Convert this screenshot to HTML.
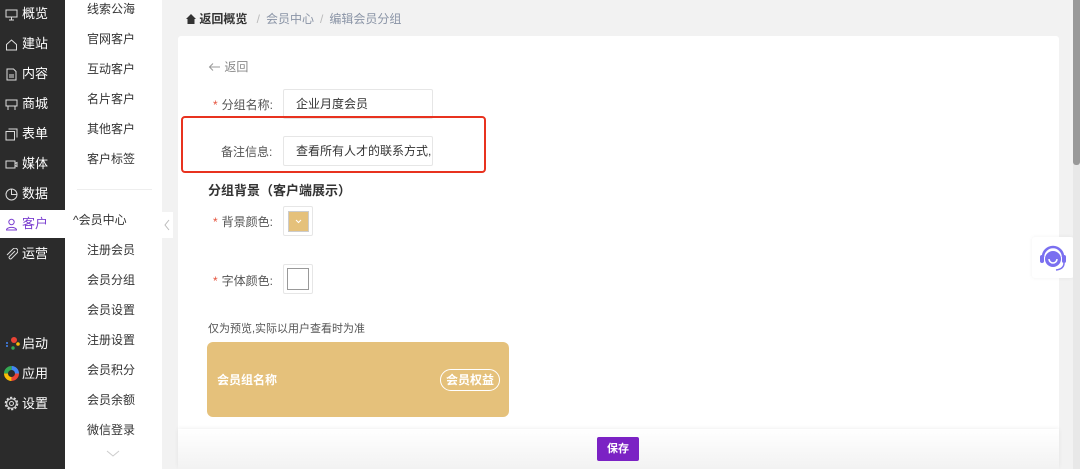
<!DOCTYPE html>
<html><head><meta charset="utf-8"><style>
*{margin:0;padding:0;box-sizing:border-box}
body{width:1080px;height:469px;overflow:hidden;background:#f2f2f2;font-family:"Liberation Sans","Noto Sans CJK SC",sans-serif;position:relative;font-size:12px;color:#333}
.side{position:absolute;left:0;top:0;width:65px;height:469px;background:#2b2b2b}
.si{position:absolute;left:0;width:65px;height:28px;color:#fff;font-size:13px;line-height:28px;padding-left:22px}
.si svg{position:absolute;left:5px;top:8px}
.si.act{background:#fff;color:#7b3fd0}
.sub{position:absolute;left:65px;top:0;width:97px;height:469px;background:#fff}
.sb{position:absolute;left:22px;font-size:12px;color:#333}
.card{position:absolute;left:178px;top:36px;width:881px;height:433px;background:#fff;border-radius:3px}
.abs{position:absolute}
.inp{position:absolute;left:283px;width:150px;height:30px;border:1px solid #e6e6e6;border-radius:2px;padding-left:12px;line-height:28px;font-size:12px;color:#333}
.lbl{position:absolute;font-size:12px;color:#555}
.star{color:#e5533d;margin-right:4px}
</style></head><body>
<div class="side">
 <div class="si" style="top:0"><svg width="13" height="13"><rect x="1" y="2" width="11" height="7" fill="none" stroke="#ddd"/><path d="M4 12h5M6.5 9v3" stroke="#ddd"/></svg>概览</div>
 <div class="si" style="top:30px"><svg width="13" height="13"><path d="M1.5 6.5L6.5 2l5 4.5V12h-10z" fill="none" stroke="#ddd"/></svg>建站</div>
 <div class="si" style="top:60px"><svg width="13" height="13"><path d="M2 1h6.5l2.5 2.5V12H2z" fill="none" stroke="#ddd"/><path d="M4 7h5M4 9h5" stroke="#ddd"/></svg>内容</div>
 <div class="si" style="top:90px"><svg width="13" height="13"><rect x="1" y="2" width="11" height="6" fill="none" stroke="#ddd"/><path d="M3 8v4M10 8v4" stroke="#ddd"/></svg>商城</div>
 <div class="si" style="top:120px"><svg width="13" height="13"><rect x="1" y="3.5" width="8.5" height="8.5" fill="none" stroke="#ddd"/><path d="M3.5 1H12v8.5" fill="none" stroke="#ddd"/></svg>表单</div>
 <div class="si" style="top:150px"><svg width="13" height="13"><rect x="1" y="3" width="9" height="7" fill="none" stroke="#ddd"/><path d="M10 5.5l2-1v4l-2-1" fill="none" stroke="#ddd"/></svg>媒体</div>
 <div class="si" style="top:180px"><svg width="13" height="13"><circle cx="6.5" cy="6.5" r="5.5" fill="none" stroke="#ddd"/><path d="M6.5 1v5.5H12" fill="none" stroke="#ddd"/></svg>数据</div>
 <div class="si act" style="top:210px"><svg width="13" height="13"><circle cx="6.5" cy="4" r="2.7" fill="none" stroke="#7b3fd0"/><path d="M1.5 12c0-3.5 10-3.5 10 0z" fill="none" stroke="#7b3fd0"/></svg>客户</div>
 <div class="si" style="top:240px"><svg width="13" height="13"><path d="M10 3L4.5 8.5a1.4 1.4 0 002 2L12 5a2.6 2.6 0 00-4-4L2 7" fill="none" stroke="#ddd"/></svg>运营</div>
 <div class="si" style="top:330px"><svg width="16" height="14" style="top:6px;left:4px"><circle cx="10" cy="4" r="3" fill="#ea4335"/><circle cx="14" cy="8" r="1.8" fill="#fbbc05"/><circle cx="9" cy="12" r="1.7" fill="#34a853"/><circle cx="3" cy="7" r="1" fill="#4285f4"/><circle cx="3" cy="10" r="1" fill="#4285f4"/></svg>启动</div>
 <div class="si" style="top:360px"><svg width="15" height="15" style="top:6px;left:4px"><circle cx="7.5" cy="7.5" r="5.5" fill="none" stroke="#ea4335" stroke-width="4" stroke-dasharray="8.64 34.6"/><circle cx="7.5" cy="7.5" r="5.5" fill="none" stroke="#fbbc05" stroke-width="4" stroke-dasharray="0 8.64 8.64 34.6"/><circle cx="7.5" cy="7.5" r="5.5" fill="none" stroke="#34a853" stroke-width="4" stroke-dasharray="0 17.28 8.64 34.6"/><circle cx="7.5" cy="7.5" r="5.5" fill="none" stroke="#4285f4" stroke-width="4" stroke-dasharray="0 25.92 8.64 34.6"/></svg>应用</div>
 <div class="si" style="top:390px"><svg width="15" height="15" style="top:6px;left:4px"><circle cx="7.5" cy="7.5" r="6" fill="none" stroke="#ddd" stroke-width="1.6" stroke-dasharray="2.2 1.6"/><circle cx="7.5" cy="7.5" r="4.8" fill="none" stroke="#ddd"/><circle cx="7.5" cy="7.5" r="2" fill="none" stroke="#ddd"/></svg>设置</div>
</div>
<div class="sub">
 <div class="sb" style="top:0px">线索公海</div>
 <div class="sb" style="top:30px">官网客户</div>
 <div class="sb" style="top:60px">互动客户</div>
 <div class="sb" style="top:90px">名片客户</div>
 <div class="sb" style="top:120px">其他客户</div>
 <div class="sb" style="top:150px">客户标签</div>
 <div class="abs" style="left:12px;top:189px;width:75px;height:1px;background:#eee"></div>
 <div class="sb" style="left:8px;top:211px">^会员中心</div>
 <div class="sb" style="top:241px">注册会员</div>
 <div class="sb" style="top:271px">会员分组</div>
 <div class="sb" style="top:301px">会员设置</div>
 <div class="sb" style="top:331px">注册设置</div>
 <div class="sb" style="top:361px">会员积分</div>
 <div class="sb" style="top:391px">会员余额</div>
 <div class="sb" style="top:421px">微信登录</div>
 <svg class="abs" style="left:41px;top:450px" width="14" height="8"><path d="M1 1l6 5 6-5" fill="none" stroke="#ccc"/></svg>
</div>
<div class="abs" style="left:162px;top:212px;width:11px;height:26px;background:#fff"><svg width="11" height="26"><path d="M7 8l-4 5 4 5" fill="none" stroke="#bbb"/></svg></div>
<div class="abs" style="left:186px;top:10px;font-size:12px;color:#333;font-weight:bold"><svg width="10" height="10" style="vertical-align:-1px"><path d="M5 0L0 5h1.5v5h7V5H10z" fill="#333"/></svg> 返回概览 <span style="color:#bbb;font-weight:normal;margin:0 6px">/</span><span style="color:#8a94a6;font-weight:normal">会员中心</span><span style="color:#bbb;font-weight:normal;margin:0 6px">/</span><span style="color:#8a94a6;font-weight:normal">编辑会员分组</span></div>
<div class="card"></div>
<div class="abs" style="left:208px;top:58px;color:#888;font-size:12px"><svg width="13" height="10" style="vertical-align:-1px"><path d="M12 5H1.5M5 1.5L1.5 5 5 8.5" fill="none" stroke="#999"/></svg> 返回</div>
<div class="lbl" style="left:213px;top:96px"><span class="star">*</span>分组名称:</div>
<div class="inp" style="top:89px">企业月度会员</div>
<div class="abs" style="left:181px;top:116px;width:305px;height:57px;border:2px solid #e8321f;border-radius:4px"></div>
<div class="lbl" style="left:221px;top:143px">备注信息:</div>
<div class="inp" style="top:136px">查看所有人才的联系方式,</div>
<div class="abs" style="left:208px;top:180px;font-size:13px;font-weight:bold;color:#333">分组背景（客户端展示）</div>
<div class="lbl" style="left:213px;top:213px"><span class="star">*</span>背景颜色:</div>
<div class="abs" style="left:283px;top:206px;width:30px;height:30px;border:1px solid #e6e6e6;border-radius:2px"><div class="abs" style="left:4px;top:4px;width:21px;height:21px;background:#e5c17b;border:1px solid #ccc"><svg width="19" height="19"><path d="M7 8l2.5 2.5L12 8" fill="none" stroke="#fff"/></svg></div></div>
<div class="lbl" style="left:213px;top:272px"><span class="star">*</span>字体颜色:</div>
<div class="abs" style="left:283px;top:264px;width:30px;height:30px;border:1px solid #e6e6e6;border-radius:2px"><div class="abs" style="left:3px;top:3px;width:22px;height:22px;border:1px solid #999;background:#fff"></div></div>
<div class="abs" style="left:208px;top:320px;font-size:11px;color:#555">仅为预览,实际以用户查看时为准</div>
<div class="abs" style="left:207px;top:342px;width:302px;height:75px;background:#e5c17b;border-radius:6px"></div>
<div class="abs" style="left:217px;top:371px;color:#fff;font-weight:bold;font-size:12px">会员组名称</div>
<div class="abs" style="left:440px;top:369px;width:60px;height:22px;border:1px solid #fff;border-radius:11px;color:#fff;font-weight:bold;font-size:12px;text-align:center;line-height:20px">会员权益</div>
<div class="abs" style="left:178px;top:429px;width:881px;height:40px;background:linear-gradient(#fff,#f2f2f2);box-shadow:0 -1px 4px rgba(0,0,0,.06)"></div>
<div class="abs" style="left:597px;top:437px;width:42px;height:24px;background:#7b22c4;border-radius:2px;color:#fff;font-size:11px;text-align:center;line-height:24px;font-weight:bold">保存</div>
<div class="abs" style="left:1032px;top:237px;width:42px;height:41px;background:#fff;border-radius:3px;box-shadow:0 0 4px rgba(0,0,0,.06)"><svg width="42" height="41"><path d="M11 20a10 10 0 0120 0" fill="none" stroke="#7a6ff0" stroke-width="2.5"/><rect x="8" y="18" width="4" height="8" rx="2" fill="#7a6ff0"/><rect x="30" y="18" width="4" height="8" rx="2" fill="#7a6ff0"/><circle cx="21" cy="22" r="8" fill="#7a6ff0"/><path d="M17 22a4 4 0 008 0" fill="none" stroke="#fff" stroke-width="1.5"/><path d="M32 26q0 6-8 7" fill="none" stroke="#7a6ff0" stroke-width="1.5"/></svg></div>
<div class="abs" style="left:1073px;top:0;width:7px;height:469px;background:#e8e8e8"></div>
<div class="abs" style="left:1073px;top:0;width:7px;height:165px;background:#999;border-radius:0 0 3px 3px"></div>
</body></html>
